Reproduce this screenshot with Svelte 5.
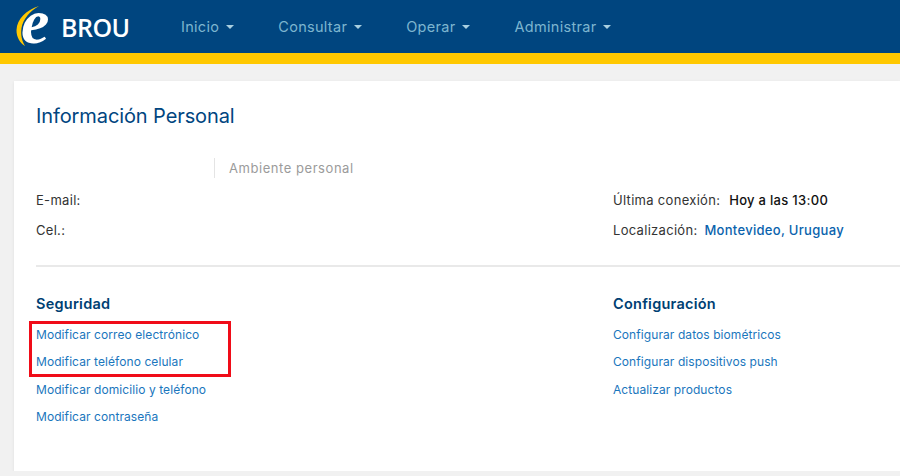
<script>
  const nav = ["Inicio", "Consultar", "Operar", "Administrar"];
  const seguridad = [
    "Modificar correo electrónico",
    "Modificar teléfono celular",
    "Modificar domicilio y teléfono",
    "Modificar contraseña"
  ];
  const configuracion = [
    "Configurar datos biométricos",
    "Configurar dispositivos push",
    "Actualizar productos"
  ];
</script>

<header class="topbar">
  <div class="logo">
    <svg class="mark" width="44" height="53" viewBox="0 0 44 53">
      <path d="M23 6 C10 10 1 19 0.500 30 C0.300 37 4 43 9 46 C6 41 4.500 35 5.500 28 C7 19 14 11 23 6 Z" fill="#ffc800" />
      <text x="5" y="43" class="e">e</text>
    </svg>
    <span class="brou">BROU</span>
  </div>
  <nav class="menu">
    {#each nav as item}
      <span class="menu-item">{item}<i class="caret"></i></span>
    {/each}
  </nav>
</header>

<main class="page">
  <section class="card">
    <h1>Información Personal</h1>

    <div class="ambient"><span>Ambiente personal</span></div>

    <div class="info">
      <div class="col">
        <p class="row">E-mail:</p>
        <p class="row">Cel.:</p>
      </div>
      <div class="col">
        <p class="row">Última conexión: <b class="dark">Hoy a las 13:00</b></p>
        <p class="row">Localización: <b class="blue">Montevideo, Uruguay</b></p>
      </div>
    </div>

    <hr />

    <div class="links">
      <div class="col marked">
        <h2>Seguridad</h2>
        {#each seguridad as link}
          <a href="#top">{link}</a>
        {/each}
        <div class="redbox"></div>
      </div>
      <div class="col">
        <h2>Configuración</h2>
        {#each configuracion as link}
          <a href="#top">{link}</a>
        {/each}
      </div>
    </div>
  </section>
</main>

<style>
  :global(body) {
    background: #f1f1f1;
    overflow: hidden;
  }

  .topbar {
    height: 53px;
    background: #00457f;
    border-bottom: 11px solid #ffc800;
    display: flex;
    align-items: center;
    font-family: Inter, sans-serif;
  }

  .logo {
    width: 181px;
    height: 53px;
    flex: none;
    position: relative;
  }

  .mark {
    position: absolute;
    left: 16px;
    top: 0;
  }

  .e {
    font: italic bold 64px "Liberation Serif", serif;
    fill: #fff;
  }

  .brou {
    position: absolute;
    left: 61px;
    top: 12px;
    font: 600 25px/30px "Open Sans", sans-serif;
    letter-spacing: -0.5px;
    color: #fff;
  }

  .menu {
    display: flex;
    gap: 44px;
  }

  .menu-item {
    display: flex;
    align-items: center;
    font-size: 14.500px;
    letter-spacing: 0.3px;
    color: #7db5cf;
  }

  .caret {
    width: 0;
    height: 0;
    margin-left: 7px;
    border-left: 4px solid transparent;
    border-right: 4px solid transparent;
    border-top: 4px solid #a9cfe0;
  }

  .page {
    padding: 17px 0 0 14px;
    font-family: Inter, sans-serif;
  }

  .card {
    background: #fff;
    height: 390px;
    padding: 0 0 0 22px;
    box-shadow: 0 1px 3px rgba(0, 0, 0, 0.08);
  }

  h1 {
    margin: 0;
    padding-top: 22px;
    font-size: 20px;
    line-height: 26px;
    font-weight: 400;
    letter-spacing: -0.1px;
    color: #00457f;
  }

  .ambient {
    margin-top: 29px;
    padding-left: 178px;
    height: 20px;
  }

  .ambient span {
    display: block;
    border-left: 1px solid #e4e4e4;
    padding-left: 14px;
    font-size: 13px;
    line-height: 20px;
    letter-spacing: 0.55px;
    color: #9b9b9b;
  }

  .info,
  .links {
    display: grid;
    grid-template-columns: 577px 1fr;
  }

  .info {
    margin-top: 14px;
  }

  .row {
    margin: 0 0 13px;
    height: 17px;
    font-size: 13px;
    line-height: 17px;
    letter-spacing: 0.3px;
    color: #333;
  }

  .row b {
    margin-left: 5px;
    font-weight: 500;
  }

  .dark {
    color: #111;
  }

  .row .blue {
    margin-left: 3px;
    color: #0a63ad;
  }

  hr {
    margin: 13px 0 0;
    border: 0;
    border-top: 2px solid #e9e9e9;
  }

  .links {
    margin-top: 28px;
  }

  .marked {
    position: relative;
  }

  h2 {
    margin: 0 0 14px;
    font-size: 14.500px;
    line-height: 18px;
    font-weight: 600;
    letter-spacing: 0.25px;
    color: #003f73;
  }

  .col a {
    display: block;
    height: 27.300px;
    font-size: 12px;
    line-height: 16px;
    letter-spacing: 0.08px;
    color: #1a76bd;
    text-decoration: none;
  }

  .redbox {
    position: absolute;
    left: -7px;
    top: 26px;
    width: 196px;
    height: 50px;
    border: 3px solid #f00c18;
  }
</style>
